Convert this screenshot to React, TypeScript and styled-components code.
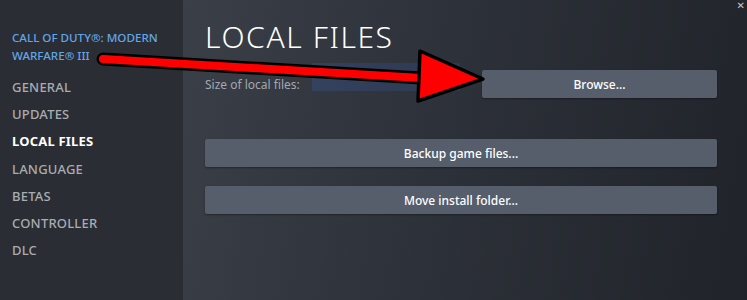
import React from 'react';
import styled, { createGlobalStyle } from 'styled-components';

const Global = createGlobalStyle`
  html, body {
    margin: 0;
    padding: 0;
    background: #23262d;
  }
  * {
    box-sizing: border-box;
  }
`;

const Window = styled.div`
  position: relative;
  display: flex;
  width: 747px;
  height: 300px;
  overflow: hidden;
  font-family: 'Noto Sans', 'Liberation Sans', sans-serif;
`;

const Sidebar = styled.div`
  width: 183px;
  flex-shrink: 0;
  background: #2a2d33;
  padding: 29px 0 0 12px;
  display: flex;
  flex-direction: column;
`;

const GameTitle = styled.div`
  color: #62a6e8;
  font-size: 11.6px;
  line-height: 18px;
  font-weight: 500;
  margin-bottom: 9px;
`;

const NavItem = styled.div<{ $active?: boolean }>`
  color: ${(p) => (p.$active ? '#ffffff' : '#a9acb1')};
  font-weight: ${(p) => (p.$active ? 700 : 500)};
  font-size: 13px;
  line-height: 27.2px;
  letter-spacing: 0.2px;
`;

const Main = styled.div`
  flex: 1;
  background: linear-gradient(100deg, #3a3f48 0%, #2d3139 45%, #20232a 100%);
  padding: 19px 30px 0 22px;
  display: flex;
  flex-direction: column;
`;

const Heading = styled.h1`
  margin: 0 0 15px 0;
  color: #ffffff;
  font-size: 30px;
  font-weight: 300;
  letter-spacing: 1.6px;
  line-height: 36px;
`;

const SizeRow = styled.div`
  display: flex;
  align-items: center;
  height: 28px;
  margin-bottom: 41px;
`;

const SizeLabel = styled.span`
  color: #a3a8b0;
  font-size: 12px;
  width: 107px;
`;

const SizeBar = styled.div`
  width: 148px;
  height: 28px;
  margin-top: -14px;
  background: linear-gradient(90deg, #34425e 0%, #2e3850 100%);
`;

const Spacer = styled.div`
  flex: 1;
`;

const Button = styled.div<{ $width?: string }>`
  width: ${(p) => p.$width || '100%'};
  height: 28px;
  background: #565e6b;
  border-radius: 2px;
  color: #ffffff;
  font-size: 12px;
  font-weight: 500;
  display: flex;
  align-items: center;
  justify-content: center;
  box-shadow: 0 1px 2px rgba(0, 0, 0, 0.35);
`;

const ButtonStack = styled.div`
  display: flex;
  flex-direction: column;
  gap: 19px;
`;

const Close = styled.div`
  position: absolute;
  top: 0;
  right: 2px;
  color: #c4c7cc;
  font-size: 10px;
  line-height: 11px;
  font-family: 'DejaVu Sans', sans-serif;
`;

const Overlay = styled.svg`
  position: absolute;
  left: 0;
  top: 0;
  pointer-events: none;
`;

const navItems = ['GENERAL', 'UPDATES', 'LOCAL FILES', 'LANGUAGE', 'BETAS', 'CONTROLLER', 'DLC'];

const Arrow = () => (
  <Overlay width={747} height={300}>
    <line x1={103} y1={59} x2={421} y2={78} stroke="#000" strokeWidth={13} strokeLinecap="round" />
    <line x1={103} y1={59} x2={421} y2={78} stroke="#ff0000" strokeWidth={8} strokeLinecap="round" />
    <path d="M420 51 L483 79 L418 101 Z" fill="#ff0000" stroke="#000" strokeWidth={3.5} strokeLinejoin="round" />
  </Overlay>
);

export default function App() {
  return (
    <>
      <Global />
      <Window>
        <Sidebar>
          <GameTitle>
            CALL OF DUTY®: MODERN
            <br />
            WARFARE® III
          </GameTitle>
          {navItems.map((item) => (
            <NavItem key={item} $active={item === 'LOCAL FILES'}>
              {item}
            </NavItem>
          ))}
        </Sidebar>
        <Main>
          <Heading>LOCAL FILES</Heading>
          <SizeRow>
            <SizeLabel>Size of local files:</SizeLabel>
            <SizeBar />
            <Spacer />
            <Button $width="235px">Browse...</Button>
          </SizeRow>
          <ButtonStack>
            <Button>Backup game files...</Button>
            <Button>Move install folder...</Button>
          </ButtonStack>
        </Main>
        <Close>✕</Close>
        <Arrow />
      </Window>
    </>
  );
}
